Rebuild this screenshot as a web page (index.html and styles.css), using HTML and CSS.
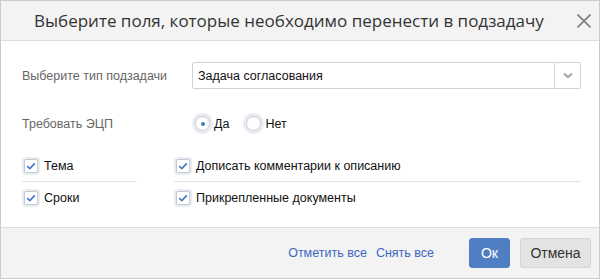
FILE: index.html
```html
<!DOCTYPE html>
<html lang="ru">
<head>
  <meta charset="utf-8">
  <title>Выберите поля</title>
  <link rel="stylesheet" href="styles.css">
</head>
<body>
  <div class="dialog">
    <header class="dialog-header">
      <h1 class="dialog-title">Выберите поля, которые необходимо перенести в подзадачу</h1>
      <button class="dialog-close" aria-label="Закрыть">
        <svg width="16" height="16" viewBox="0 0 16 16"><path d="M1.5 1.5L14.5 14.5M14.5 1.5L1.5 14.5" stroke="#767676" stroke-width="1.7" fill="none"/></svg>
      </button>
    </header>

    <main class="dialog-body">
      <div class="field">
        <label class="field-label">Выберите тип подзадачи</label>
        <div class="select">
          <span class="select-value">Задача согласования</span>
          <span class="select-arrow">
            <svg width="10" height="7" viewBox="0 0 10 7"><path d="M1 1.5L5 5.2L9 1.5" stroke="#a0a0a0" stroke-width="2" fill="none"/></svg>
          </span>
        </div>
      </div>

      <div class="field field-radio">
        <label class="field-label">Требовать ЭЦП</label>
        <div class="radios">
          <label class="radio checked"><span class="radio-mark"></span>Да</label>
          <label class="radio"><span class="radio-mark"></span>Нет</label>
        </div>
      </div>

      <div class="checks">
        <label class="check divided"><span class="check-mark"><svg width="10" height="8" viewBox="0 0 10 8"><path d="M1.2 4.2L3.8 6.6L8.8 1.4" stroke="#4a78c2" stroke-width="1.8" fill="none"/></svg></span>Тема</label>
        <label class="check divided"><span class="check-mark"><svg width="10" height="8" viewBox="0 0 10 8"><path d="M1.2 4.2L3.8 6.6L8.8 1.4" stroke="#4a78c2" stroke-width="1.8" fill="none"/></svg></span>Дописать комментарии к описанию</label>
        <label class="check"><span class="check-mark"><svg width="10" height="8" viewBox="0 0 10 8"><path d="M1.2 4.2L3.8 6.6L8.8 1.4" stroke="#4a78c2" stroke-width="1.8" fill="none"/></svg></span>Сроки</label>
        <label class="check"><span class="check-mark"><svg width="10" height="8" viewBox="0 0 10 8"><path d="M1.2 4.2L3.8 6.6L8.8 1.4" stroke="#4a78c2" stroke-width="1.8" fill="none"/></svg></span>Прикрепленные документы</label>
      </div>
    </main>

    <footer class="dialog-footer">
      <a class="link" href="#">Отметить все</a>
      <a class="link" href="#">Снять все</a>
      <button class="btn btn-primary">Ок</button>
      <button class="btn">Отмена</button>
    </footer>
  </div>
</body>
</html>
```

FILE: styles.css
```css
html, body {
    margin: 0;
    background: #fff;
}
body {
    font-family: "Liberation Sans", Arial, sans-serif;
    font-size: 12.5px;
    color: #222;
}

.dialog {
    width: 600px;
    height: 279px;
    box-sizing: border-box;
    border: 1px solid #c7cbd3;
    display: flex;
    flex-direction: column;
    background: #fff;
}

/* шапка */
.dialog-header {
    height: 40px;
    box-sizing: border-box;
    border-bottom: 1px solid #dedede;
    background: #f3f3f3;
    display: flex;
    align-items: center;
    padding-left: 33px;
    padding-right: 7px;
}
.dialog-title {
    flex: 1;
    margin: 0;
    font-family: "Open Sans", "Noto Sans", sans-serif;
    font-weight: normal;
    font-size: 17px;
    color: #333;
    white-space: nowrap;
}
.dialog-close {
    width: 16px;
    height: 16px;
    padding: 0;
    border: 0;
    background: none;
    display: flex;
}

/* тело */
.dialog-body {
    flex: 1;
    padding: 21px 18px 0 21px;
}
.field {
    display: grid;
    grid-template-columns: 170px 1fr;
    align-items: center;
}
.field-label {
    color: #666;
}
.field-radio {
    margin-top: 24px;
    height: 20px;
}

.select {
    height: 27px;
    box-sizing: border-box;
    border: 1px solid #cfd3d9;
    border-radius: 2px;
    display: flex;
    align-items: center;
}
.select-value {
    flex: 1;
    padding-left: 5px;
    color: #111;
}
.select-arrow {
    width: 25px;
    height: 100%;
    border-left: 1px solid #d8d8d8;
    display: flex;
    align-items: center;
    justify-content: center;
}

.radios {
    display: flex;
    align-items: center;
    gap: 14px;
}
.radio {
    display: flex;
    align-items: center;
    gap: 1px;
    color: #111;
}
.radio-mark {
    width: 13px;
    height: 13px;
    border-radius: 50%;
    border: 1px solid #c7ccd3;
    background: #fff;
    box-shadow: 0 0 0 3px #e8ecf2;
    margin: 3px;
    display: flex;
    align-items: center;
    justify-content: center;
}
.radio.checked .radio-mark::after {
    content: "";
    width: 4px;
    height: 4px;
    border-radius: 50%;
    background: #4a78c2;
}

.checks {
    margin-top: 17px;
    display: grid;
    grid-template-columns: 115px 1fr;
    column-gap: 37px;
}
.check {
    height: 31px;
    display: flex;
    align-items: center;
    gap: 4px;
    color: #111;
}
.check.divided {
    border-bottom: 1px solid #e2e2e2;
}
.check-mark {
    width: 18px;
    height: 18px;
    box-sizing: border-box;
    border-radius: 4px;
    background: #e8ecf2;
    padding: 2px;
    display: flex;
}
.check-mark svg {
    width: 14px;
    height: 14px;
    box-sizing: border-box;
    border: 1px solid #c4c9d1;
    border-radius: 2px;
    background: #fff;
    padding: 2px 1px;
}

/* подвал */
.dialog-footer {
    height: 51px;
    box-sizing: border-box;
    border-top: 1px solid #dedede;
    background: #f3f3f3;
    display: flex;
    align-items: center;
    justify-content: flex-end;
    padding-right: 8px;
}
.link {
    color: #3d66c4;
    text-decoration: none;
    margin-left: 9px;
}
.btn {
    height: 30px;
    box-sizing: border-box;
    border: 1px solid #d3d3d3;
    border-radius: 3px;
    background: #e3e3e3;
    font-family: "Liberation Sans", Arial, sans-serif;
    font-size: 14px;
    color: #333;
    width: 71px;
    padding: 0;
    margin-left: 10px;
}
.btn-primary {
    margin-left: 35px;
    width: 41px;
    background: #4f7fc2;
    border-color: #4f7fc2;
    color: #fff;
}
```
